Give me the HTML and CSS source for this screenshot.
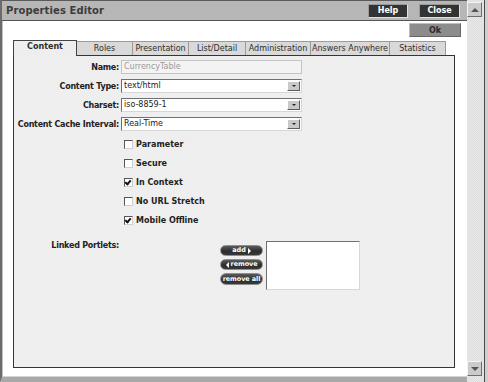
FILE: index.html
```html
<!DOCTYPE html>
<html lang="en">

	<head>
		<meta charset="UTF-8" />
		<meta name="viewport" content="width=device-width, initial-scale=1.0" />
		<title>Properties Editor</title>
		<link rel="stylesheet" href="styles.css">
	</head>

	<body>
		<div class="screen">
			<div class="window">
				<div class="titlebar">
					<span class="title">Properties Editor</span>
					<div class="title-btns">
						<button class="tbtn">Help</button>
						<button class="tbtn">Close</button>
					</div>
				</div>

				<div class="content">
					<div class="okrow"><button class="okbtn">Ok</button></div>

					<div class="tabs">
						<div class="tab active w-content">Content</div>
						<div class="tab w-roles">Roles</div>
						<div class="tab w-pres">Presentation</div>
						<div class="tab w-list">List/Detail</div>
						<div class="tab w-admin">Administration</div>
						<div class="tab w-aa">Answers Anywhere</div>
						<div class="tab w-stats">Statistics</div>
					</div>

					<div class="panel">
						<div class="form">
							<label class="lbl">Name:</label>
							<div class="field disabled">CurrencyTable</div>

							<label class="lbl">Content Type:</label>
							<div class="field select">text/html<span class="arrow"></span></div>

							<label class="lbl">Charset:</label>
							<div class="field select">iso-8859-1<span class="arrow"></span></div>

							<label class="lbl">Content Cache Interval:</label>
							<div class="field select">Real-Time<span class="arrow"></span></div>
						</div>

						<ul class="checks">
							<li><span class="box"></span>Parameter</li>
							<li><span class="box"></span>Secure</li>
							<li><span class="box checked"></span>In Context</li>
							<li><span class="box"></span>No URL Stretch</li>
							<li><span class="box checked"></span>Mobile Offline</li>
						</ul>

						<div class="linked">
							<label class="lbl">Linked Portlets:</label>
							<div class="pills">
								<button class="pill">add <span class="tri-r"></span></button>
								<button class="pill"><span class="tri-l"></span> remove</button>
								<button class="pill">remove all</button>
							</div>
							<div class="listbox"></div>
						</div>
					</div>
				</div>
			</div>

			<div class="scrollbar">
				<div class="sbtn"><span class="tri-up"></span></div>
				<div class="sbtn"><span class="tri-down"></span></div>
			</div>
			<div class="edge"></div>
		</div>
	</body>

</html>
```

FILE: styles.css
```css
body {
	margin: 0;
	font-family: "DejaVu Sans", Verdana, sans-serif;
	color: #222;
}

.screen {
	display: flex;
	width: 488px;
	height: 382px;
	background: #fff;
}

/* the popup window */
.window {
	width: 468px;
	height: 382px;
	box-sizing: border-box;
	display: flex;
	flex-direction: column;
	border-left: 2px solid #6b6b6b;
	border-bottom: 5px solid #a9a9a9;
	box-shadow: inset 1px 0 0 #c2c2c2, inset 0 -1px 0 #d4d4d4;
	background: #fff;
}

.titlebar {
	height: 21px;
	box-sizing: border-box;
	display: flex;
	align-items: center;
	justify-content: space-between;
	border-top: 1px solid #5a5a5a;
	border-bottom: 1px solid #555;
	background: repeating-conic-gradient(#b3b3b3 0 25%, #bababa 0 50%) 0 0/2px 2px;
	padding: 0 7px 0 4px;
}

.title {
	font-size: 10px;
	font-weight: bold;
	color: #3c3c3c;
	letter-spacing: 0.1px;
}

.title-btns {
	display: flex;
	gap: 11px;
}

.tbtn {
	height: 14px;
	padding: 0;
	border: 1px solid #9a9a9a;
	border-right-color: #e0e0e0;
	border-bottom-color: #e0e0e0;
	background: #333;
	color: #fff;
	font: bold 8px "DejaVu Sans", sans-serif;
	width: 40px;
}

.tbtn + .tbtn {
	width: 41px;
}

.content {
	flex: 1;
	padding-left: 11px;
	box-shadow: inset 1px 0 0 #c2c2c2;
}

.okrow {
	display: flex;
	justify-content: flex-end;
	padding: 2px 6px 0 0;
}

.okbtn {
	width: 52px;
	height: 14px;
	padding: 0;
	border: 1px solid #666;
	border-top-color: #bdbdbd;
	border-left-color: #bdbdbd;
	background: #8c8c8c;
	color: #2a2a2a;
	font: bold 8px "DejaVu Sans", sans-serif;
}

/* tabs */
.tabs {
	display: flex;
	align-items: flex-end;
	margin-top: 3px;
	height: 15px;
}

.tab {
	height: 14px;
	box-sizing: border-box;
	border: 1px solid #9b9b9b;
	border-bottom: none;
	border-left: none;
	background: repeating-conic-gradient(#d6d6d6 0 25%, #dcdcdc 0 50%) 0 0/2px 2px;
	font-size: 8px;
	line-height: 13px;
	text-align: center;
	color: #2e2e2e;
	white-space: nowrap;
}

.tab.active {
	height: 16px;
	margin-bottom: -1px;
	border: 1px solid #444;
	border-bottom: none;
	background: #eee;
	font-weight: bold;
	line-height: 12px;
	position: relative;
}

.w-content { width: 64px; }
.w-roles { width: 56px; }
.w-pres { width: 56px; }
.w-list { width: 57px; }
.w-admin { width: 65px; }
.w-aa { width: 79px; }
.w-stats { width: 56px; }

.panel {
	width: 442px;
	height: 313px;
	box-sizing: border-box;
	border: 1px solid #353535;
	background: repeating-conic-gradient(#ececec 0 25%, #f1f1f1 0 50%) 0 0/2px 2px;
	padding-top: 4px;
}

.lbl {
	font-size: 8px;
	font-weight: bold;
	letter-spacing: -0.25px;
	color: #222;
	text-align: right;
	padding-right: 2px;
	white-space: nowrap;
}

.form {
	display: grid;
	grid-template-columns: 107px 181px;
	row-gap: 5px;
	align-items: center;
}

.field {
	height: 14px;
	box-sizing: border-box;
	border: 1px solid #6f6f6f;
	border-right-color: #d6d6d6;
	border-bottom-color: #d6d6d6;
	background: #fff;
	font-size: 8px;
	line-height: 12px;
	padding-left: 2px;
	color: #222;
	display: flex;
	justify-content: space-between;
	align-items: center;
}

.field.disabled {
	border-color: #c4c4c4;
	background: #f3f3f3;
	color: #9a9a9a;
}

.arrow {
	width: 13px;
	height: 10px;
	margin-right: 1px;
	box-sizing: border-box;
	border: 1px solid #fff;
	border-right-color: #5c5c5c;
	border-bottom-color: #5c5c5c;
	background: #c9c9c9;
	display: flex;
	align-items: center;
	justify-content: center;
}

.arrow::after {
	content: "";
	border-left: 2px solid transparent;
	border-right: 2px solid transparent;
	border-top: 2px solid #222;
}

/* check boxes */
.checks {
	list-style: none;
	margin: 4px 0 0 110px;
	padding: 0;
}

.checks li {
	height: 19px;
	display: flex;
	align-items: center;
	gap: 3px;
	font-size: 8px;
	font-weight: bold;
	color: #222;
}

.box {
	width: 9px;
	height: 9px;
	box-sizing: border-box;
	border: 1px solid #555;
	border-right-color: #cfcfcf;
	border-bottom-color: #cfcfcf;
	background: #fff;
	position: relative;
}

.box.checked::after {
	content: "";
	position: absolute;
	left: 1px;
	top: 0;
	width: 2px;
	height: 4px;
	border-right: 2px solid #111;
	border-bottom: 2px solid #111;
	transform: rotate(40deg);
}

/* linked portlets */
.linked {
	display: grid;
	grid-template-columns: 107px 145px 94px;
	margin-top: 11px;
}

.linked .lbl {
	padding-top: 0;
	line-height: 9px;
}

.pills {
	display: flex;
	flex-direction: column;
	align-items: flex-end;
	gap: 3px;
	padding: 4px 3px 0 0;
}

.pill {
	width: 43px;
	height: 11px;
	padding: 0;
	border: 1px solid #8d8d8d;
	border-radius: 6px;
	background: linear-gradient(#5a5a5a, #2c2c2c 60%, #3a3a3a);
	color: #fff;
	font: bold 6.5px/9px "DejaVu Sans", sans-serif;
	letter-spacing: -0.1px;
	white-space: nowrap;
	display: flex;
	align-items: center;
	justify-content: center;
	gap: 2px;
}

.pill:last-child {
	height: 12px;
}

.tri-r {
	border-top: 3px solid transparent;
	border-bottom: 3px solid transparent;
	border-left: 3px solid #fff;
}

.tri-l {
	border-top: 3px solid transparent;
	border-bottom: 3px solid transparent;
	border-right: 3px solid #fff;
}

.listbox {
	height: 49px;
	box-sizing: border-box;
	border: 1px solid #707070;
	border-right-color: #d8d8d8;
	border-bottom-color: #d8d8d8;
	background: #fff;
}

/* page scrollbar */
.scrollbar {
	width: 17px;
	height: 382px;
	display: flex;
	flex-direction: column;
	justify-content: space-between;
	padding: 2px 0 6px;
	box-sizing: border-box;
	background: repeating-conic-gradient(#dedede 0 25%, #e8e8e8 0 50%) 0 0/2px 2px;
}

.sbtn {
	width: 15px;
	height: 15px;
	box-sizing: border-box;
	border: 1px solid #f4f4f4;
	border-right-color: #6e6e6e;
	border-bottom-color: #6e6e6e;
	background: #cbcbcb;
	display: flex;
	align-items: center;
	justify-content: center;
}

.tri-up {
	border-left: 4px solid transparent;
	border-right: 4px solid transparent;
	border-bottom: 4px solid #555;
}

.tri-down {
	border-left: 4px solid transparent;
	border-right: 4px solid transparent;
	border-top: 4px solid #555;
}

.edge {
	width: 3px;
	height: 382px;
	border-left: 1px solid #4a4a4a;
	background: #cfcfcf;
}
```
